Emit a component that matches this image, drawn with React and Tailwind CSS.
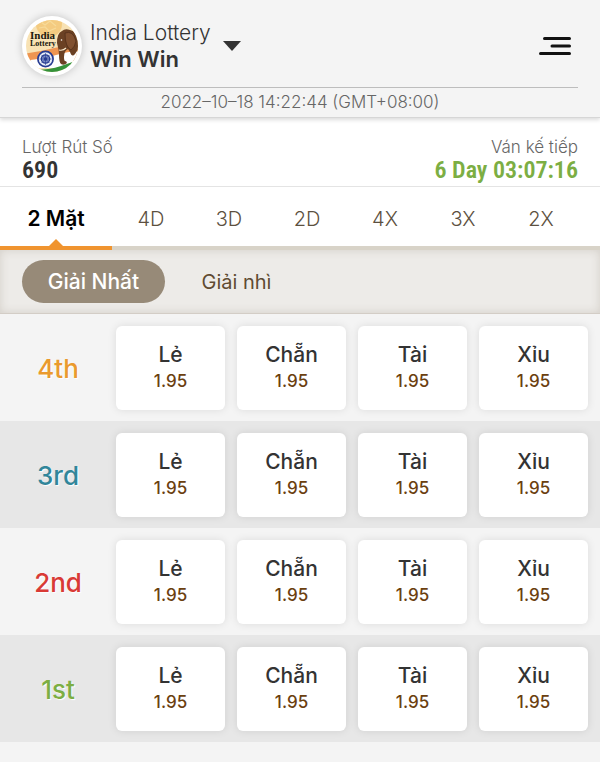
import React from "react";

const tabs = ["4D", "3D", "2D", "4X", "3X", "2X"];

const rows = [
  { label: "4th", color: "text-[#ea9a2e]", bg: "bg-[#f4f4f4]" },
  { label: "3rd", color: "text-[#31869a]", bg: "bg-[#e7e7e7]" },
  { label: "2nd", color: "text-[#d93a35]", bg: "bg-[#f4f4f4]" },
  { label: "1st", color: "text-[#7cae43]", bg: "bg-[#e7e7e7]" },
];

const bets = ["Lẻ", "Chẵn", "Tài", "Xỉu"];

function Logo() {
  return (
    <svg viewBox="0 0 60 60" className="size-[60px] shrink-0 rounded-full bg-white shadow-[0_0_8px_rgba(0,0,0,0.2)]" role="img" aria-label="India Lottery">
      <defs>
        <clipPath id="disc"><circle cx="30" cy="30" r="26" /></clipPath>
      </defs>
      <g clipPath="url(#disc)">
        <rect width="60" height="60" fill="#f8e2b4" />
        <circle cx="27" cy="8" r="13" fill="#f4cb80" />
        <path d="M19 6l4 3 5-4 6 5M17 12l6-1 4 4 7-3" stroke="#f7da98" strokeWidth="1.2" fill="none" />
        <path d="M0 38Q16 36 28 33T44 31L60 34V45H0z" fill="#ee9552" />
        <path d="M0 45Q20 43 34 39T60 35V52H0z" fill="#fff" />
        <path d="M10 54Q28 54 39 50T60 43V60H8z" fill="#35923a" />
        <path d="M35 27Q35 17 40 15Q43 12 48 14Q54 15 56 24L57 32L53 38Q50 42 48 36L46 33Q42 35 42 41Q42 46 44 45L45 47Q42 50 39 48Q37 46 37 39Q37 34 35 27z" fill="#6b4124" />
        <path d="M43 17Q51 14 54 25Q53 31 49 34Q43 31 43 17z" fill="#805030" stroke="#4c2b18" strokeWidth="0.7" />
        <circle cx="39.5" cy="24" r="0.8" fill="#fff" />
        <path d="M37 34Q41 35 44 32" stroke="#f5e7cb" strokeWidth="1.2" fill="none" />
      </g>
      <circle cx="23.5" cy="43" r="7.6" fill="#e8edf8" stroke="#273b91" strokeWidth="1.7" />
      <circle cx="23.5" cy="43" r="4.2" fill="#8090c8" stroke="#273b91" strokeWidth="1.2" />
      <path d="M23.5 37v12M17.5 43h12M19.3 38.8l8.4 8.4M27.7 38.8l-8.4 8.4" stroke="#273b91" strokeWidth="0.6" />
      <circle cx="23.5" cy="43" r="1.7" fill="#273b91" />
      <text x="8" y="23" fontFamily="Liberation Serif, serif" fontSize="11" fontWeight="700" fill="#20170d">India</text>
      <text x="8" y="30" fontFamily="Liberation Serif, serif" fontSize="8" fontWeight="700" fill="#20170d">Lottery</text>
    </svg>
  );
}

export default function App() {
  return (
    <div className="min-h-screen bg-[#f4f4f4] font-[Inter,'Noto_Sans',sans-serif] text-[#333]">
      <header className="relative border-b border-[#d6d6d6] bg-[#f4f4f4] px-[22px] pt-4 shadow-[0_2px_4px_rgba(0,0,0,0.14)]">
        <div className="flex items-center justify-between border-b border-[#bdbdbd] pb-[11px]">
          <button type="button" className="flex items-center text-left">
            <Logo />
            <span className="ml-2 block leading-[26px]">
              <span className="block text-[21px] font-light">India Lottery</span>
              <span className="block text-[22px] font-semibold">Win Win</span>
            </span>
            <svg viewBox="0 0 18 10" className="ml-3 h-[10px] w-[18px] fill-[#333]" aria-hidden="true"><path d="M0 0h18L9 10z" /></svg>
          </button>
          <button type="button" aria-label="Menu" className="mr-[7px]">
            <svg viewBox="0 0 32 18" className="h-[18px] w-8" aria-hidden="true">
              <path d="M5.5 1.5H30.5M13 9H30.5M1.5 16.5H30.5" stroke="#111" strokeWidth="3" strokeLinecap="round" />
            </svg>
          </button>
        </div>
        <p className="pb-px text-center text-[17px] leading-7 font-light text-[#666]">2022–10–18 14:22:44 (GMT+08:00)</p>
      </header>

      <section className="flex justify-between border-b border-[#e4e4e4] bg-white px-[22px] pt-[18px] pb-1">
        <div>
          <p className="text-[17px] leading-[22px] font-light text-[#666]">Lượt Rút Số</p>
          <p className="font-['Roboto_Condensed','Liberation_Sans_Narrow',sans-serif] text-2xl leading-6 font-semibold">690</p>
        </div>
        <div className="text-right">
          <p className="text-[17px] leading-[22px] font-light text-[#666]">Ván kế tiếp</p>
          <p className="font-['Roboto_Condensed','Liberation_Sans_Narrow',sans-serif] text-2xl leading-6 font-semibold text-[#7cae43]">6 Day 03:07:16</p>
        </div>
      </section>

      <nav className="flex h-[63px] bg-white pr-5 text-xl shadow-[inset_0_-4px_0_#d8d3c8]">
        <button type="button" className="relative w-28 text-[21px] font-semibold text-black shadow-[inset_0_-4px_0_#f0942f]">
          2 Mặt
          <svg viewBox="0 0 14 7" className="absolute bottom-1 left-1/2 h-[7px] w-[14px] -translate-x-1/2 fill-[#f0942f]" aria-hidden="true"><path d="M0 7L7 0l7 7z" /></svg>
        </button>
        {tabs.map((tab) => (
          <button key={tab} type="button" className="flex-1 font-light text-[#5c5040]">{tab}</button>
        ))}
      </nav>

      <div className="flex h-16 items-center border-b border-[#d3cdc6] bg-[#edebe8] px-[22px] shadow-[inset_0_0_10px_rgba(80,60,40,0.16)]">
        <button type="button" className="h-[43px] w-[143px] rounded-full bg-[#978a78] text-[21px] font-medium text-white">Giải Nhất</button>
        <button type="button" className="h-[43px] w-[143px] text-xl text-[#5f4b32]">Giải nhì</button>
      </div>

      <main>
        {rows.map((row) => (
          <section key={row.label} className={"flex pt-3 pr-3 pb-[11px] " + row.bg}>
            <h2 className={"flex w-[116px] shrink-0 items-center justify-center text-[26px] font-medium [text-shadow:1px_1px_1px_#fff] " + row.color}>{row.label}</h2>
            <div className="grid flex-1 grid-cols-4 gap-3">
              {bets.map((bet) => (
                <button key={bet} type="button" className="flex h-[84px] flex-col items-center justify-center rounded-md bg-white shadow-[0_0_8px_rgba(0,0,0,0.1)]">
                  <span className="text-[21px] leading-[26px] font-medium">{bet}</span>
                  <span className="text-[17px] leading-[26px] font-medium text-[#6b400f]">1.95</span>
                </button>
              ))}
            </div>
          </section>
        ))}
      </main>
    </div>
  );
}
